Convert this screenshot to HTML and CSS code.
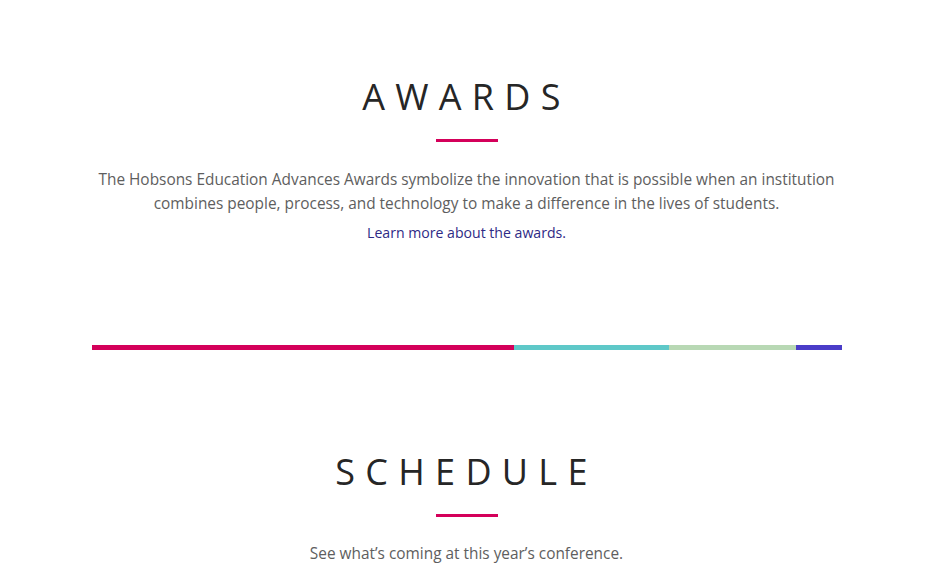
FILE: index.html
```html
<!DOCTYPE html>
<html lang="en">
<head>
<meta charset="utf-8">
<title>Awards</title>
<link rel="stylesheet" href="styles.css">
</head>
<body>
<main class="page">
  <section class="section section-awards">
    <h2 class="section-title">AWARDS</h2>
    <div class="title-rule"></div>
    <p class="section-text">The Hobsons Education Advances Awards symbolize the innovation that is possible when an institution combines people, process, and technology to make a difference in the lives of students.</p>
    <a class="section-link" href="#">Learn more about the awards.</a>
  </section>
  <div class="color-bar">
    <span class="seg seg-pink"></span>
    <span class="seg seg-teal"></span>
    <span class="seg seg-green"></span>
    <span class="seg seg-blue"></span>
  </div>
  <section class="section section-schedule">
    <h2 class="section-title">SCHEDULE</h2>
    <div class="title-rule"></div>
    <p class="section-text section-text-short">See what’s coming at this year’s conference.</p>
  </section>
</main>
</body>
</html>
```
FILE: styles.css
```css
* { box-sizing: border-box; }
html, body { margin: 0; padding: 0; background: #fff; }
body {
  font-family: "Open Sans", "Liberation Sans", sans-serif;
  color: #5a5a5a;
  overflow: hidden;
}
.page {
  width: 750px;
  margin: 0 auto;
}
.section {
  display: flex;
  flex-direction: column;
  align-items: center;
  text-align: center;
}
.section-awards { padding-top: 72px; padding-bottom: 101px; }
.section-schedule { padding-top: 97px; }
.section-title {
  margin: 0;
  font-size: 36px;
  font-weight: 400;
  line-height: 50px;
  letter-spacing: 10.3px;
  color: #262626;
}
.title-rule {
  width: 62px;
  height: 3px;
  background: #d4005a;
  margin-top: 17px;
}
.section-text {
  margin: 26px 0 0;
  font-size: 15.4px;
  line-height: 24px;
  color: #5e5e5e;
}
.section-text-short { margin-top: 25px; }
.section-link {
  margin-top: 6px;
  font-size: 14.1px;
  line-height: 22px;
  color: #2e2a85;
  text-decoration: none;
}
.color-bar {
  display: flex;
  height: 5px;
}
.seg { display: block; height: 100%; }
.seg-pink { width: 422px; background: #d4005a; }
.seg-teal { width: 155px; background: #5ec8c8; }
.seg-green { width: 127px; background: #b8d8b4; }
.seg-blue { width: 46px; background: #4a3cc8; }
```
